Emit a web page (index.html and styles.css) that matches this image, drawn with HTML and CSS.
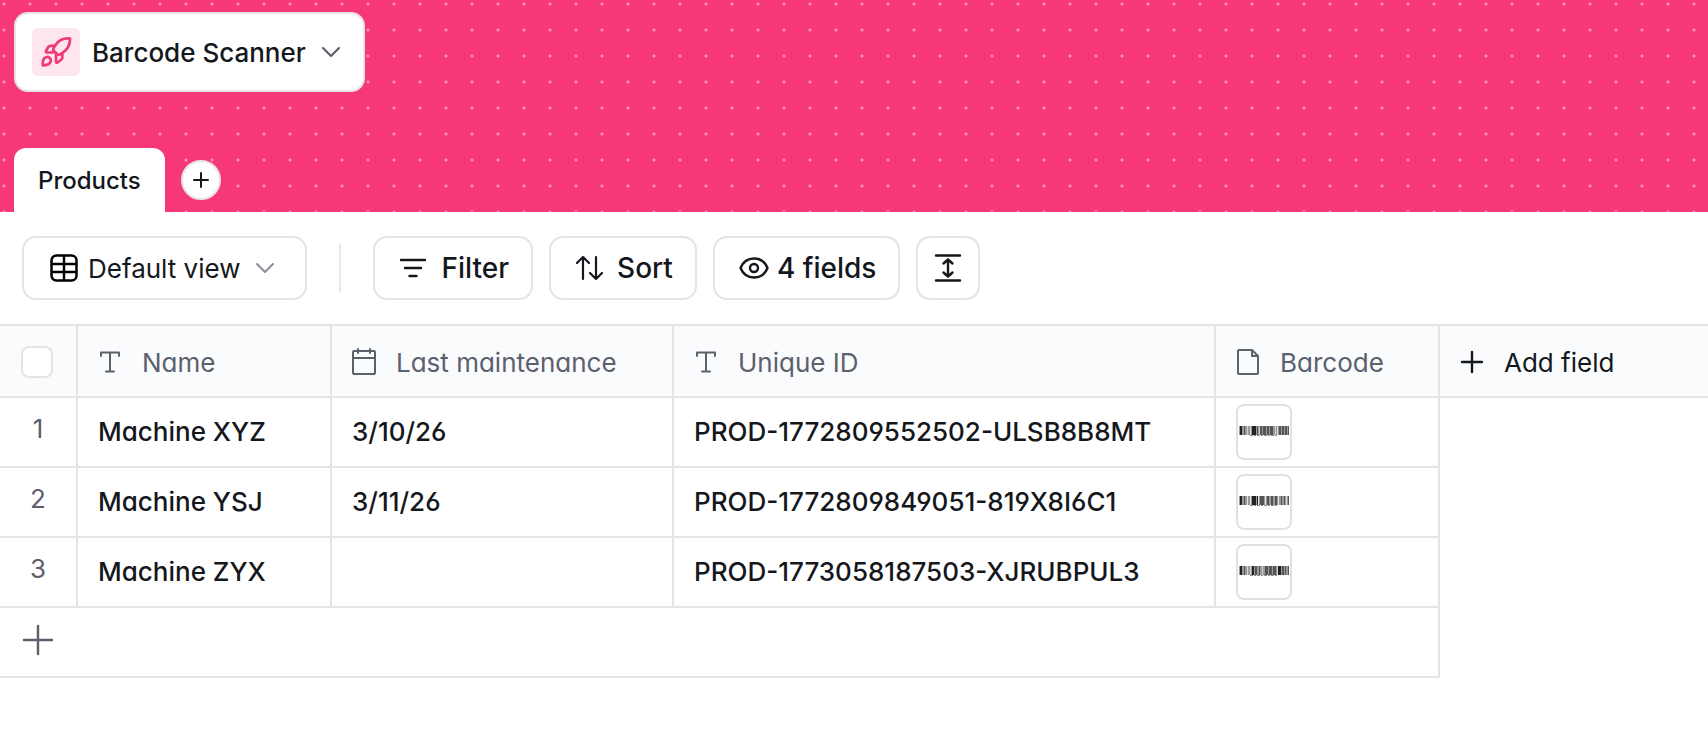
FILE: index.html
```
<!DOCTYPE html>
<html lang="en">
<head>
<meta charset="utf-8">
<title>Barcode Scanner</title>
<link rel="stylesheet" href="styles.css">
</head>
<body>
<header class="banner">
  <button class="app-switch" type="button">
    <span class="app-icon">
      <svg width="32" height="32" viewBox="0 0 32 32" fill="none" stroke="currentColor" stroke-width="2.700" stroke-linejoin="round" stroke-linecap="round"><path d="M30 2.500C24 2 18.500 4.500 15.500 9c-2 3-2.700 4.500-2.200 5.300l4.400 4.400c1 .6 3-.5 5.300-2.200C27.500 13.300 30.300 8.500 30 2.500z"/><path d="M15 9.800H10.500c-1 0-1.700.4-2.200 1.200L6 15c-.4 1 0 1.500.8 1.500h6.500M22.300 17v4.500c0 1-.4 1.700-1.200 2.200L17.500 26.500c-.9.400-1.500 0-1.500-.8V18.700"/><path d="M2.800 29.300c-.3-3.500.3-5.800 1.800-7.200 1.500-1.300 3.700-1.400 5.200-.1 1.400 1.400 1.400 3.600 0 5.100-1.400 1.500-3.700 2.200-7 2.200z"/></svg>
    </span>
    <span class="app-name">Barcode Scanner</span>
    <svg class="chev" width="20" height="12" viewBox="0 0 20 12" fill="none" stroke="currentColor" stroke-width="2" stroke-linecap="round" stroke-linejoin="round"><path d="M2 2l8 8 8-8"/></svg>
  </button>
  <nav class="tabs">
    <a class="tab" href="#products">Products</a>
    <button class="tab-add" type="button" aria-label="Add table"><svg width="16" height="16" viewBox="0 0 16 16" stroke="currentColor" stroke-width="2" stroke-linecap="round"><path d="M8 1v14M1 8h14"/></svg></button>
  </nav>
</header>
<main>
  <div class="toolbar">
    <button class="tool view" type="button">
      <svg width="28" height="28" viewBox="0 0 28 28" fill="none" stroke="#000" stroke-width="2.500"><rect x="1.500" y="1.500" width="25" height="25" rx="5"/><path d="M14 1.500v25M1.500 10h25M1.500 18h25"/></svg>
      <span>Default view</span>
      <svg class="view-chev" width="20" height="12" viewBox="0 0 20 12" fill="none" stroke="currentColor" stroke-width="2" stroke-linecap="round" stroke-linejoin="round"><path d="M2 2l8 8 8-8"/></svg>
    </button>
    <span class="divider"></span>
    <button class="tool" type="button">
      <svg width="28" height="28" viewBox="0 0 28 28" stroke="currentColor" stroke-width="2.400" stroke-linecap="round"><path d="M2 6h24M6 14h16M10.500 22h7"/></svg>
      <span>Filter</span>
    </button>
    <button class="tool" type="button">
      <svg width="28" height="28" viewBox="0 0 28 28" fill="none" stroke="currentColor" stroke-width="2.200" stroke-linecap="round" stroke-linejoin="round"><path d="M8 25V3M2 9l6-6 6 6M21 3v22M15 19l6 6 6-6"/></svg>
      <span>Sort</span>
    </button>
    <button class="tool fields" type="button">
      <svg width="30" height="28" viewBox="0 0 30 28" fill="none" stroke="currentColor" stroke-width="2.400" stroke-linejoin="round"><path d="M1.500 14C4 8 9 4.500 15 4.500S26 8 28.500 14C26 20 21 23.500 15 23.500S4 20 1.500 14z"/><circle cx="15" cy="14" r="4"/></svg>
      <span>4 fields</span>
    </button>
    <button class="tool square" type="button" aria-label="Row height">
      <svg width="28" height="28" viewBox="0 0 28 28" fill="none" stroke="currentColor" stroke-width="2.400" stroke-linecap="round" stroke-linejoin="round"><path d="M2 1.500h24M2 26.500h24M14 6v16M9.500 9.500L14 5.500l4.500 4M9.500 18.500l4.500 4 4.500-4"/></svg>
    </button>
  </div>
  <table class="grid" id="products">
    <colgroup><col class="c-num"><col class="c-name"><col class="c-date"><col class="c-id"><col class="c-code"><col></colgroup>
    <thead>
      <tr>
        <th class="num"><input class="tick" type="checkbox" aria-label="Select all rows"></th>
        <th><span class="head"><svg width="24" height="26" viewBox="0 0 24 26" fill="none" stroke="currentColor" stroke-width="2" stroke-linecap="round" stroke-linejoin="round"><path d="M3 7V3.500h18V7M12 3.500v19M8 22.500h8"/></svg>Name</span></th>
        <th><span class="head"><svg width="24" height="28" viewBox="0 0 24 28" fill="none" stroke="currentColor" stroke-width="2" stroke-linecap="round" stroke-linejoin="round"><rect x="1" y="3" width="22" height="23" rx="1"/><path d="M1 10h22M6 1v4M18 1v4"/></svg>Last maintenance</span></th>
        <th><span class="head"><svg width="24" height="26" viewBox="0 0 24 26" fill="none" stroke="currentColor" stroke-width="2" stroke-linecap="round" stroke-linejoin="round"><path d="M3 7V3.500h18V7M12 3.500v19M8 22.500h8"/></svg>Unique ID</span></th>
        <th><span class="head"><svg width="24" height="28" viewBox="0 0 24 28" fill="none" stroke="currentColor" stroke-width="2" stroke-linecap="round" stroke-linejoin="round"><path d="M3 2h13l6 6v17a1 1 0 0 1-1 1H3a1 1 0 0 1-1-1V3a1 1 0 0 1 1-1zM16 2v6h6"/></svg>Barcode</span></th>
        <th class="last"><button class="head add" type="button"><svg width="24" height="24" viewBox="0 0 24 24" stroke="currentColor" stroke-width="2.400" stroke-linecap="round"><path d="M12 2v20M2 12h20"/></svg>Add field</button></th>
      </tr>
    </thead>
    <tbody>
      <tr>
        <td class="num">1</td><td>Machine XYZ</td><td>3/10/26</td><td>PROD-1772809552502-ULSB8B8MT</td>
        <td class="code"><span class="thumb"><svg width="52" height="12" viewBox="0 0 52 12"><path fill="#999" d="M1 0h50v9H1z"/><path fill="#222" d="M2 0h2v9H2zM14 0h4v9h-4z"/><path fill="#555" d="M6 0h1v9H6zM19 0h1v9h-1zM22 0h2v9h-2zM25 0h3v9h-3zM29 0h2v9h-2zM32 0h3v9h-3zM41 0h2v9h-2zM44 0h2v9h-2zM47 0h2v9h-2zM50 0h1v9h-1z"/><path fill="#d2d2d2" d="M9 0h1v9H9zM12 0h1v9h-1zM21 0h1v9h-1zM37 0h1v9h-1zM39 0h1v9h-1z"/><path stroke="#888" stroke-dasharray="3 1 2 1" d="M12 9.500h28"/></svg></span></td><td class="blank"></td>
      </tr>
      <tr>
        <td class="num">2</td><td>Machine YSJ</td><td>3/11/26</td><td>PROD-1772809849051-819X8I6C1</td>
        <td class="code"><span class="thumb"><svg width="52" height="12" viewBox="0 0 52 12"><path fill="#999" d="M1 0h50v9H1z"/><path fill="#222" d="M2 0h2v9H2zM14 0h4v9h-4zM19 0h1v9h-1z"/><path fill="#555" d="M6 0h1v9H6zM22 0h4v9h-4zM29 0h2v9h-2zM33 0h2v9h-2zM37 0h2v9h-2zM43 0h1v9h-1zM46 0h1v9h-1zM50 0h1v9h-1z"/><path fill="#e2e2e2" d="M9 0h1v9H9zM12 0h1v9h-1zM20 0h1v9h-1zM27 0h1v9h-1zM40 0h1v9h-1zM48 0h1v9h-1z"/><path stroke="#888" stroke-dasharray="3 1 2 1" d="M12 9.500h28"/></svg></span></td><td class="blank"></td>
      </tr>
      <tr>
        <td class="num">3</td><td>Machine ZYX</td><td></td><td>PROD-1773058187503-XJRUBPUL3</td>
        <td class="code"><span class="thumb"><svg width="52" height="12" viewBox="0 0 52 12"><path fill="#999" d="M1 0h50v9H1z"/><path fill="#222" d="M2 0h2v9H2zM14 0h2v9h-2zM40 0h3v9h-3z"/><path fill="#555" d="M6 0h1v9H6zM17 0h2v9h-2zM21 0h1v9h-1zM27 0h3v9h-3zM31 0h3v9h-3zM35 0h3v9h-3zM44 0h2v9h-2zM47 0h1v9h-1zM50 0h1v9h-1z"/><path fill="#d2d2d2" d="M9 0h1v9H9zM12 0h1v9h-1zM24 0h1v9h-1zM39 0h1v9h-1z"/><path stroke="#888" stroke-dasharray="3 1 2 1" d="M12 9.500h28"/></svg></span></td><td class="blank"></td>
      </tr>
      <tr>
        <td class="new-row" colspan="5"><button class="row-add" type="button" aria-label="Add row"><svg width="32" height="32" viewBox="0 0 32 32" stroke="currentColor" stroke-width="2.400" stroke-linecap="round"><path d="M16 2v28M2 16h28"/></svg></button></td><td class="blank"></td>
      </tr>
    </tbody>
  </table>
</main>
</body>
</html>
```
FILE: styles.css
```
* { box-sizing: border-box; }
body { margin: 0; background: #fff; color: #14171c; font-family: Inter, "Liberation Sans", sans-serif; font-size: 26px; }
button { font: inherit; color: inherit; cursor: pointer; }
svg { display: block; flex: none; }
.banner {
  display: flex; flex-direction: column; align-items: flex-start; gap: 56px;
  padding: 12px 14px 0;
  background: radial-gradient(circle at 4px 4px, #fc8fb2 1px, transparent 2px) 0 0 / 26px 26px #f6387a;
}
.app-switch {
  display: flex; align-items: center; gap: 12px; height: 80px; padding: 0 22px 0 16px;
  background: #fff; border: 2px solid #e6e3e5; border-radius: 14px; font-weight: 500;
}
.app-icon { display: flex; align-items: center; justify-content: center; width: 48px; height: 48px; border-radius: 6px; background: #ffe5ee; color: #ee3a78; }
.chev { margin-left: 3px; color: #555a64; }
.tabs { display: flex; align-items: center; gap: 16px; }
.tab { display: flex; align-items: center; height: 64px; padding: 0 24px; background: #fff; border-radius: 12px 12px 0 0; color: inherit; text-decoration: none; font-size: 24px; font-weight: 500; }
.tab-add { display: flex; align-items: center; justify-content: center; width: 40px; height: 40px; padding: 0; border: 2px solid #e6e3e5; border-radius: 50%; background: #fff; }
.toolbar { display: flex; align-items: center; gap: 16px; padding: 24px 22px; }
.tool { display: flex; align-items: center; gap: 14px; height: 64px; padding: 0 22px 0 24px; background: #fff; border: 2px solid #e3e4e5; border-radius: 14px; font-size: 28px; font-weight: 500; }
.view { gap: 10px; padding: 0 30px 0 26px; font-size: 26px; font-weight: 400; }
.view-chev { margin-left: 5px; color: #8d9096; }
.divider { width: 2px; height: 48px; margin: 0 16px; background: #e8e8e8; }
.fields { gap: 8px; }
.square { width: 64px; padding: 0; justify-content: center; }
.grid { width: 100%; border-spacing: 0; table-layout: fixed; font-feature-settings: "cv11", "cv03", "cv04"; }
.c-num { width: 78px; }
.c-name { width: 254px; }
.c-date { width: 342px; }
.c-id { width: 542px; }
.c-code { width: 224px; }
th, td { height: 70px; padding: 0 20px 2px; border-right: 2px solid #e3e4e5; border-bottom: 2px solid #e3e4e5; text-align: left; white-space: nowrap; font-weight: 500; }
th { height: 74px; padding: 2px 20px 0; border-top: 2px solid #e3e4e5; background: #fafbfd; color: #5c606d; font-weight: 400; }
.head { display: flex; align-items: center; gap: 20px; }
.num { padding-left: 0; padding-right: 2px; text-align: center; color: #5c606d; font-weight: 400; }
td.num { padding-right: 0; padding-bottom: 8px; }
td.code { padding-bottom: 0; }
.last, .blank { border-right: 0; }
.blank { border-bottom: 0; }
.add { padding: 0; border: 0; background: none; color: #14171c; }
.tick { appearance: none; display: block; width: 32px; height: 32px; margin: 0 auto; border: 2px solid #e3e4e5; border-radius: 8px; background: #fff; }
.thumb { display: flex; align-items: center; justify-content: center; width: 56px; height: 56px; border: 2px solid #e0e1e2; border-radius: 8px; background: #fff; }
.new-row { padding: 0 22px 4px; }
.row-add { display: block; padding: 0; border: 0; background: none; color: #5c606d; }
```
